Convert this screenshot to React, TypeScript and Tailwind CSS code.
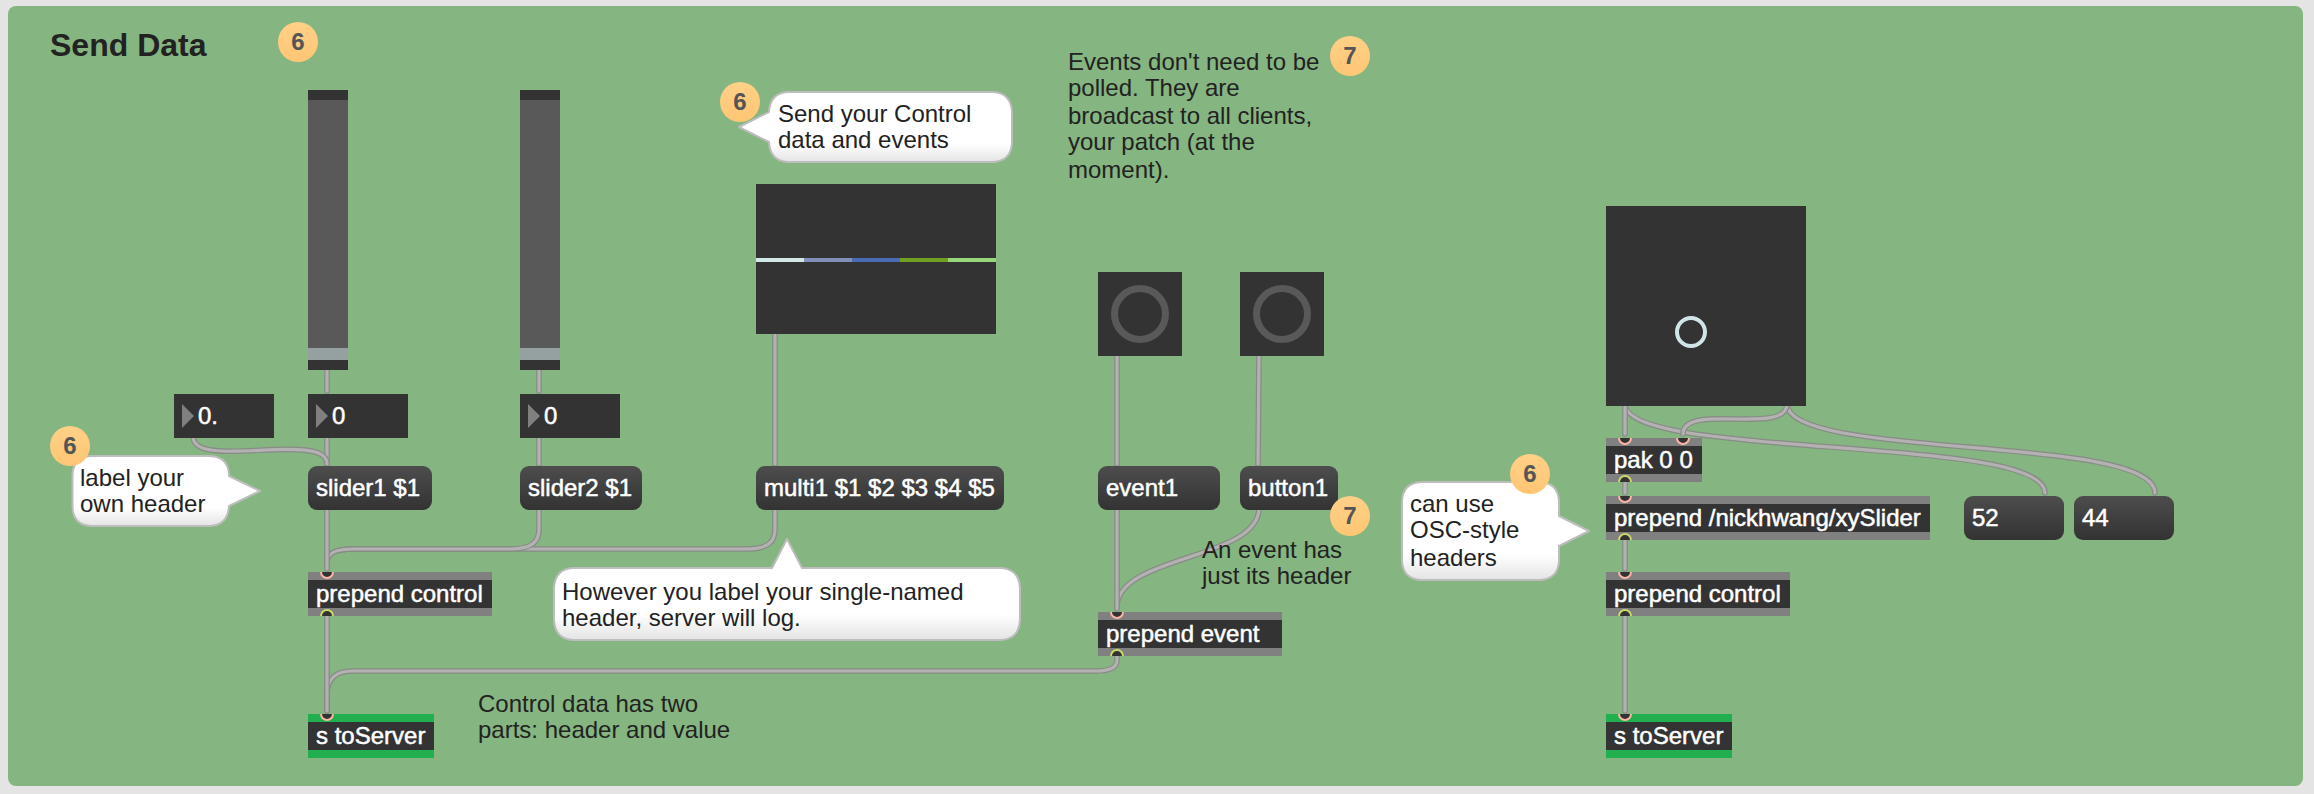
import type { ReactNode } from "react";

const WIRES = [
  "M327 368V391",
  "M327 436V464",
  "M193 436C193 448 206 451.6 234 451.2C250 451 270 449.6 287 449.4C314 449.4 327 453 327 464",
  "M775 508V529C775 542 768 549 746 549H353C340 549 327 551 327 562",
  "M539 508V529C539 542 532 549 510 549H353C340 549 327 551 327 562",
  "M327 508V569",
  "M1117 654V660C1117 668 1110 671 1096 671H353C337 671 327 677 327 695V711",
  "M327 614V711",
  "M539 368V391",
  "M539 436V464",
  "M775 332V464",
  "M1259 354L1258 464",
  "M1259 508C1259 560 1117 555 1117 607",
  "M1117 354V464",
  "M1117 508V609",
  "M1625 404C1625 460 2045 434 2045 493",
  "M1787 404C1787 460 2155 434 2155 493",
  "M1787 404C1787 436 1683 402 1683 434",
  "M1625 404V434",
  "M1625 480V493",
  "M1625 538V569",
  "M1625 614V711",
];

function Wires() {
  return (
    <svg className="absolute left-0 top-0" width="2314" height="794" fill="none" strokeLinecap="round">
      {WIRES.map((d) => (
        <g key={d}>
          <path d={d} stroke="#888b86" strokeWidth="5.6" />
          <path d={d} stroke="#b3b1b2" strokeWidth="3.2" />
        </g>
      ))}
    </svg>
  );
}

function Lines({ at, lines }: { at: string; lines: string[] }) {
  return (
    <div className={`absolute flex flex-col whitespace-nowrap leading-[27px] text-[#222] ${at}`}>
      {lines.map((line, i) => (
        <div key={line} className={i % 2 === 0 ? "h-[26px]" : "h-[28px]"}>
          {line}
        </div>
      ))}
    </div>
  );
}

function Badge({ at, n }: { at: string; n: number }) {
  return (
    <div
      className={`absolute flex size-10 items-center justify-center rounded-full bg-linear-to-b from-[#ffd088] to-[#ffc674] pb-px font-bold leading-[27px] text-[#555] ${at}`}
    >
      {n}
    </div>
  );
}

function Message({ at, children }: { at: string; children: ReactNode }) {
  return (
    <div
      className={`absolute flex h-11 items-center rounded-[9px] bg-linear-to-b from-[#4d4d4d] to-[#333] pb-px pl-2 leading-[27px] whitespace-nowrap text-white [-webkit-text-stroke:0.5px_white] ${at}`}
    >
      {children}
    </div>
  );
}

function Port({ at, out = false }: { at: string; out?: boolean }) {
  return (
    <svg className={`absolute ${at}`} width="14" height="7" viewBox={out ? "0 0 14 7" : "0 7 14 7"}>
      <circle cx="7" cy="7" r="6" fill="#333" stroke={out ? "#cdd866" : "#ffb3a7"} strokeWidth="2" />
    </svg>
  );
}

function Obj({
  at,
  children,
  send = false,
  secondInlet = false,
}: {
  at: string;
  children: ReactNode;
  send?: boolean;
  secondInlet?: boolean;
}) {
  return (
    <div
      className={`absolute flex h-11 items-center border-y-8 bg-[#333] pb-px pl-2 leading-[27px] whitespace-nowrap text-white [-webkit-text-stroke:0.5px_white] ${send ? "border-[#21af50]" : "border-[#808080]"} ${at}`}
    >
      <Port at="left-3 -top-2" />
      {secondInlet && <Port at="left-[70px] -top-2" />}
      {!send && <Port at="left-3 -bottom-2" out />}
      {children}
    </div>
  );
}

function NumberBox({ at, value }: { at: string; value: string }) {
  return (
    <div className={`absolute flex h-11 w-[100px] items-center gap-1 bg-[#333] pl-2 leading-[27px] text-white [-webkit-text-stroke:0.5px_white] ${at}`}>
      <svg width="12" height="24">
        <path d="M0 0L12 12L0 24Z" fill="#808080" />
      </svg>
      <span className="pb-px">{value}</span>
    </div>
  );
}

function Slider({ at }: { at: string }) {
  return (
    <div className={`absolute flex h-[280px] w-10 flex-col bg-[#333] py-2.5 ${at}`}>
      <div className="flex-1 bg-[#595959]" />
      <div className="h-3 bg-[#95a1a1]" />
    </div>
  );
}

function Bang({ at }: { at: string }) {
  return (
    <div className={`absolute flex size-[84px] items-center justify-center bg-[#333] ${at}`}>
      <div className="size-[58px] rounded-full border-[7px] border-[#595959]" />
    </div>
  );
}

function Bubble({ d, id }: { d: string; id: string }) {
  return (
    <svg className="absolute left-0 top-0" width="2314" height="794">
      <defs>
        <linearGradient id={id} x1="0" y1="0" x2="0" y2="1">
          <stop offset="0" stopColor="#fff" />
          <stop offset="0.74" stopColor="#fff" />
          <stop offset="1" stopColor="#e4e4e4" />
        </linearGradient>
      </defs>
      <path d={d} fill={`url(#${id})`} stroke="#bebdbe" strokeWidth="2" strokeLinejoin="round" />
    </svg>
  );
}

export default function App() {
  return (
    <div className="relative h-[794px] w-[2314px] overflow-hidden bg-[#e4e4e4] pl-2 pt-1.5 font-['Liberation_Sans',Arial,sans-serif] text-2xl">
      <div className="h-[780px] w-[2295px] rounded-lg bg-[#85b580]" />

      <Wires />

      <Obj at="left-[308px] top-[572px] w-[184px]">prepend control</Obj>
      <Obj at="left-[308px] top-[714px] w-[126px]" send>s toServer</Obj>
      <Obj at="left-[1098px] top-[612px] w-[184px]">prepend event</Obj>
      <Obj at="left-[1606px] top-[438px] w-[96px]" secondInlet>pak 0 0</Obj>
      <Obj at="left-[1606px] top-[496px] w-[324px]">prepend /nickhwang/xySlider</Obj>
      <Obj at="left-[1606px] top-[572px] w-[184px]">prepend control</Obj>
      <Obj at="left-[1606px] top-[714px] w-[126px]" send>s toServer</Obj>

      <Slider at="left-[308px] top-[90px]" />
      <Slider at="left-[520px] top-[90px]" />
      <NumberBox at="left-[174px] top-[394px]" value="0." />
      <NumberBox at="left-[308px] top-[394px]" value="0" />
      <NumberBox at="left-[520px] top-[394px]" value="0" />

      <div className="absolute left-[756px] top-[184px] flex h-[150px] w-[240px] bg-[#333] pt-[74px]">
        <div className="h-1 w-12 bg-[#d2e8e6]" />
        <div className="h-1 w-12 bg-[#8090b9]" />
        <div className="h-1 w-12 bg-[#4b6cb4]" />
        <div className="h-1 w-12 bg-[#709f21]" />
        <div className="h-1 w-12 bg-[#98d777]" />
      </div>

      <Bang at="left-[1098px] top-[272px]" />
      <Bang at="left-[1240px] top-[272px]" />
      <div className="absolute left-[1606px] top-[206px] size-[200px] bg-[#333] pl-[69px] pt-[110px]">
        <div className="size-8 rounded-full border-4 border-[#d0e5e8]" />
      </div>

      <Message at="left-[308px] top-[466px] w-[124px]">slider1 $1</Message>
      <Message at="left-[520px] top-[466px] w-[122px]">slider2 $1</Message>
      <Message at="left-[756px] top-[466px] w-[248px]">multi1 $1 $2 $3 $4 $5</Message>
      <Message at="left-[1098px] top-[466px] w-[122px]">event1</Message>
      <Message at="left-[1240px] top-[466px] w-[98px]">button1</Message>
      <Message at="left-[1964px] top-[496px] w-[100px]">52</Message>
      <Message at="left-[2074px] top-[496px] w-[100px]">44</Message>

      <Bubble
        id="bubble-label"
        d="M91 456H210Q229 457 229 476L260 491L229 506Q228 525 210 526H91Q73 525 72.5 507V475Q73 457 91 456Z"
      />
      <Bubble
        id="bubble-send"
        d="M788 92H993Q1011 93 1012 112V143Q1011 161 993 162H788Q770 161 769 142L739 127L769 112Q770 93 788 92Z"
      />
      <Bubble
        id="bubble-however"
        d="M573 568H772L787 539L802 568H1001Q1019 569 1020 588V620Q1019 639 1001 640H573Q555 639 554 620V588Q555 569 573 568Z"
      />
      <Bubble
        id="bubble-osc"
        d="M1421 482H1540Q1558 483 1559 501V516L1589 531L1559 546V561Q1558 579 1540 580H1421Q1403 579 1402 561V501Q1403 483 1421 482Z"
      />

      <h1 className="absolute left-[50px] top-[27px] text-[32px] leading-9 font-bold text-[#222]">Send Data</h1>
      <Lines at="left-[80px] top-[464px]" lines={["label your", "own header"]} />
      <Lines at="left-[778px] top-[100px]" lines={["Send your Control", "data and events"]} />
      <Lines at="left-[562px] top-[578px]" lines={["However you label your single-named", "header, server will log."]} />
      <Lines at="left-[1410px] top-[490px]" lines={["can use", "OSC-style", "headers"]} />
      <Lines at="left-[478px] top-[690px]" lines={["Control data has two", "parts: header and value"]} />
      <Lines at="left-[1202px] top-[536px]" lines={["An event has", "just its header"]} />
      <Lines
        at="left-[1068px] top-[48px]"
        lines={["Events don't need to be", "polled. They are", "broadcast to all clients,", "your patch (at the", "moment)."]}
      />

      <Badge at="left-[278px] top-[22px]" n={6} />
      <Badge at="left-[720px] top-[82px]" n={6} />
      <Badge at="left-[50px] top-[426px]" n={6} />
      <Badge at="left-[1330px] top-[36px]" n={7} />
      <Badge at="left-[1330px] top-[496px]" n={7} />
      <Badge at="left-[1510px] top-[454px]" n={6} />
    </div>
  );
}
